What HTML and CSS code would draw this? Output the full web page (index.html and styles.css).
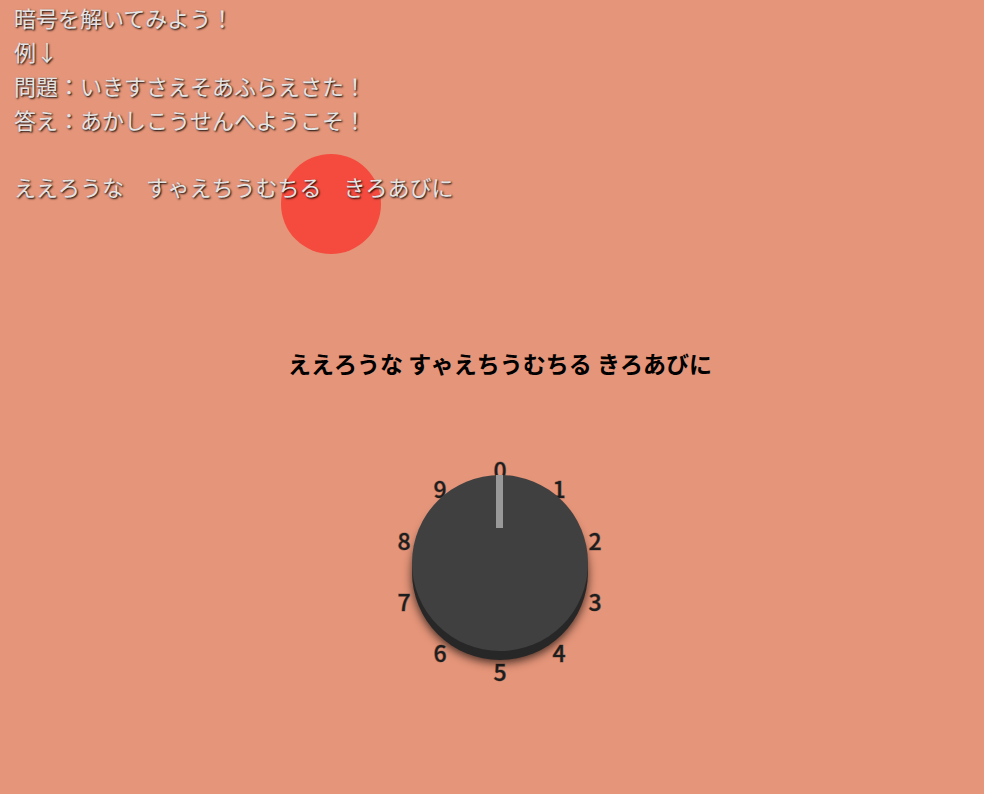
FILE: index.html
```
<!DOCTYPE html>
<html lang="ja">
<head>
<meta charset="utf-8">
<title>暗号を解いてみよう！</title>
<link rel="stylesheet" href="styles.css">
</head>
<body>
<div class="spot" aria-hidden="true"></div>
<section class="intro">
  <p>暗号を解いてみよう！</p>
  <p>例↓</p>
  <p>問題：いきすさえそあふらえさた！</p>
  <p>答え：あかしこうせんへようこそ！</p>
  <p class="cipher">ええろうな　すゃえちうむちる　きろあびに</p>
</section>
<main class="puzzle">
  <output class="result" for="shift">ええろうな すゃえちうむちる きろあびに</output>
  <div class="dial">
    <svg class="face" viewBox="0 0 240 240" width="240" height="240">
      <g class="digits">
        <text x="120" y="29">0</text>
        <text x="179" y="48">1</text>
        <text x="215" y="100">2</text>
        <text x="215" y="161">3</text>
        <text x="179" y="212">4</text>
        <text x="120" y="231">5</text>
        <text x="60" y="212">6</text>
        <text x="24" y="161">7</text>
        <text x="24" y="100">8</text>
        <text x="60" y="48">9</text>
      </g>
      <circle class="base" cx="120" cy="122" r="88"/>
      <circle class="cap" cx="120" cy="113" r="88"/>
      <rect class="needle" x="116" y="25" width="7" height="53"/>
    </svg>
    <input class="control" id="shift" type="range" min="0" max="9" value="0" aria-label="ダイヤル">
  </div>
</main>
</body>
</html>
```
FILE: styles.css
```
* {
  box-sizing: border-box;
}

body {
  position: relative;
  margin: 0;
  min-height: 100vh;
  background: #e59579;
  font-family: "Noto Sans CJK JP", sans-serif;
}

.spot {
  position: absolute;
  top: 154px;
  left: 281px;
  width: 100px;
  height: 100px;
  border-radius: 50%;
  background: #f54b3e;
}

.intro {
  position: relative;
  padding: 0 14px;
  font-size: 22px;
  line-height: 34px;
  color: #e4e4e4;
  text-shadow: 1px 1px 2px #000;
}

.intro p {
  margin: 0;
}

.intro .cipher {
  margin-top: 33px;
}

.puzzle {
  display: flex;
  flex-direction: column;
  align-items: center;
  gap: 70px;
  padding: 143px 0 0 16px;
}

.result {
  font-size: 23px;
  font-weight: 700;
  line-height: 34px;
  color: #000;
}

.dial {
  position: relative;
  width: 240px;
}

.face {
  display: block;
}

.digits {
  fill: #1e1e1e;
  stroke: #1e1e1e;
  stroke-width: 1px;
  stroke-opacity: 0.4;
  font-size: 23px;
  font-weight: 500;
  text-anchor: middle;
}

.base {
  fill: #272727;
  filter: drop-shadow(0 3px 5px rgba(0, 0, 0, 0.7));
}

.cap {
  fill: #404040;
}

.needle {
  fill: #999;
}

.control {
  position: absolute;
  inset: 24px 32px;
  margin: 0;
  opacity: 0;
  cursor: pointer;
}
```
